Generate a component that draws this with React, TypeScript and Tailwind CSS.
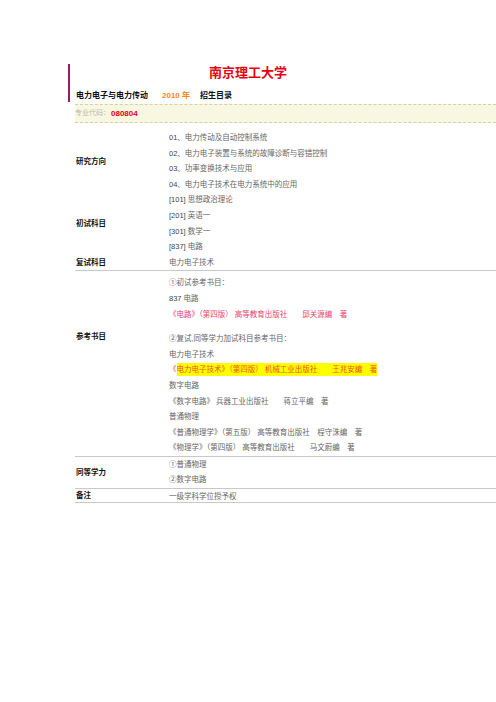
const sans = "font-['Liberation_Sans','Noto_Sans_CJK_SC',sans-serif]";

interface LineProps {
  children: React.ReactNode;
  className?: string;
}

const Line = ({ children, className }: LineProps) => (
  <div className={`h-[15.6px] leading-[15.6px] whitespace-nowrap ${className ?? ""}`}>{children}</div>
);

const Row = ({ label, children, border, labelClass }: { label: string; children: React.ReactNode; border?: boolean; labelClass?: string }) => (
  <div className={`flex ${border ? "border-b border-[#c9c9c9]" : ""}`}>
    <div className={`w-[94px] shrink-0 pl-[1px] font-bold text-[7.5px] text-[#111] ${labelClass ?? "self-center"}`}>{label}</div>
    <div className="flex-1 text-[7.5px] text-[#666]">{children}</div>
  </div>
);

const num = "text-[#444]";

export default function App() {
  return (
    <div className={`w-[496px] h-[702px] bg-white pt-[64px] pl-[68px] overflow-hidden ${sans}`}>
      <div className="border-l-2 border-[#a3195b] h-[38px]">
        <div className="pr-[70px] text-center text-[13px] leading-[18px] font-bold text-[#e60012]">南京理工大学</div>
        <div className="mt-[8px] pl-[6px] flex text-[8px] leading-[12px] font-bold text-[#111] whitespace-nowrap">
          <span>电力电子与电力传动</span>
          <span className="ml-[14px] text-[#f08a1c]">2010 年</span>
          <span className="ml-[10px]">招生目录</span>
        </div>
      </div>

      <div className="ml-[7px] mt-[2px] h-[19px] flex items-center border-y border-dashed border-[#d6d0a2] bg-[#f8f8e2] whitespace-nowrap">
        <span className="text-[7px] text-[#b9b9a8]">专业代码：</span>
        <span className="ml-[1px] text-[8px] font-bold text-[#e60012]">080804</span>
      </div>

      <div className="ml-[7px]">
        <div className="pt-[7px]">
          <Row label="研究方向">
            <Line><span className={num}>01、</span>电力传动及自动控制系统</Line>
            <Line><span className={num}>02、</span>电力电子装置与系统的故障诊断与容错控制</Line>
            <Line><span className={num}>03、</span>功率变换技术与应用</Line>
            <Line><span className={num}>04、</span>电力电子技术在电力系统中的应用</Line>
          </Row>
          <Row label="初试科目">
            <Line><span className={num}>[101]</span> 思想政治理论</Line>
            <Line><span className={num}>[201]</span> 英语一</Line>
            <Line><span className={num}>[301]</span> 数学一</Line>
            <Line><span className={num}>[837]</span> 电路</Line>
          </Row>
        </div>
        <Row label="复试科目" border>
          <Line>电力电子技术</Line>
        </Row>

        <Row label="参考书目" border labelClass="self-start pt-[60px]">
          <div className="pt-[4px]">
            <Line>①初试参考书目：</Line>
            <Line><span className={num}>837</span> 电路</Line>
            <Line className="text-[#e8436f]">《电路》（第四版） 高等教育出版社　　邱关源编　著</Line>
            <div className="h-[9px]" />
            <Line>②复试,同等学力加试科目参考书目：</Line>
            <Line>电力电子技术</Line>
            <Line className="text-[#f2501c]">
              《<span className="bg-[#ffff00] py-[2px]">电力电子技术》（第四版） 机械工业出版社　　王兆安编　著</span>
            </Line>
            <Line>数字电路</Line>
            <Line>《数字电路》 兵器工业出版社　　蒋立平编　著</Line>
            <Line>普通物理</Line>
            <Line>《普通物理学》（第五版） 高等教育出版社　程守洙编　著</Line>
            <Line>《物理学》（第四版） 高等教育出版社　　马文蔚编　著</Line>
          </div>
        </Row>

        <Row label="同等学力" border>
          <div>
            <Line>①普通物理</Line>
            <Line>②数字电路</Line>
          </div>
        </Row>

        <Row label="备注" border>
          <div className="pt-[2px] h-[13px] leading-[12px] whitespace-nowrap">一级学科学位授予权</div>
        </Row>
      </div>
    </div>
  );
}
